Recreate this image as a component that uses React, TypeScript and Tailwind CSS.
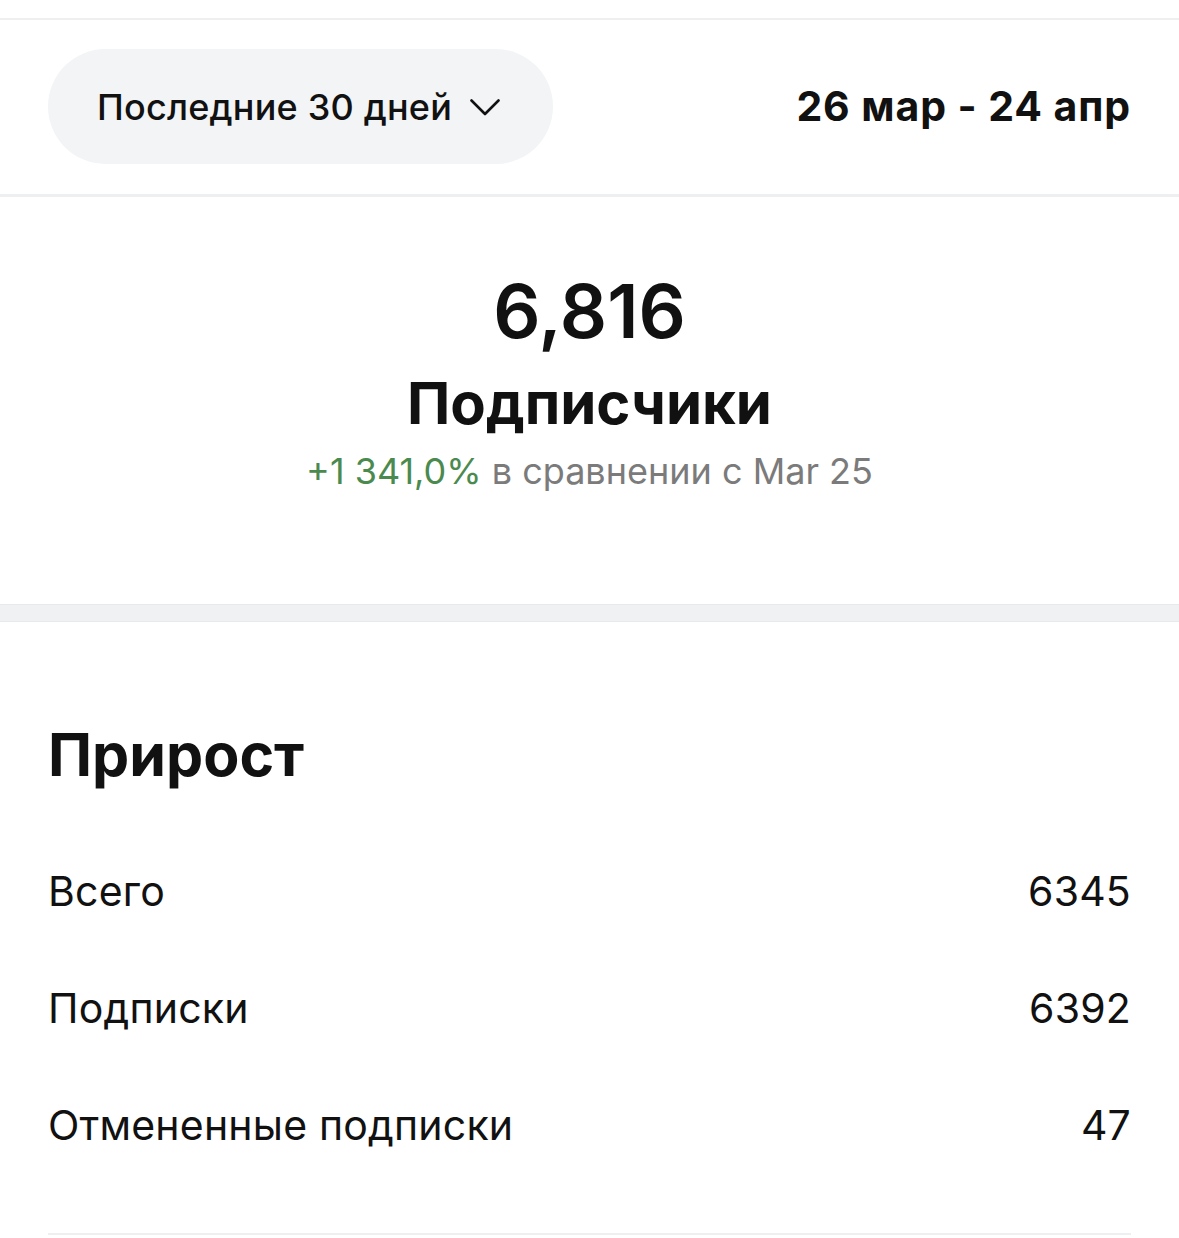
const rows = [
  { label: "Всего", value: "6345" },
  { label: "Подписки", value: "6392" },
  { label: "Отмененные подписки", value: "47" },
];

const App = () => {
  return (
    <div className="min-h-screen bg-white text-[#111111] font-['Inter','Noto_Sans',sans-serif]">
      {/* TOP BAR */}
      <div className="pt-[18px]">
        <div className="h-[2px] bg-[#eeeff1]" />
      </div>

      <div className="flex items-center justify-between px-[48px] pt-[29px] pb-[30px]">
        <button className="flex h-[115px] w-[505px] items-center gap-[18px] rounded-full bg-[#f2f4f5] pl-[49px] text-[36px] font-medium tracking-[0.2px]">
          Последние 30 дней
          <svg width="30" height="17" viewBox="0 0 30 17" fill="none" className="mt-[2px]">
            <polyline
              points="1.5,1.5 15,15 28.5,1.5"
              stroke="#111111"
              strokeWidth="2.6"
              strokeLinecap="round"
              strokeLinejoin="round"
            />
          </svg>
        </button>
        <div className="text-[41px] font-bold tracking-[0.9px]">26 мар - 24 апр</div>
      </div>

      <div className="h-[3px] bg-[#eeeff1]" />

      {/* TOTAL */}
      <div className="flex flex-col items-center pt-[64px] pb-[111px]">
        <div className="text-[74px] font-semibold leading-[100px]">6,816</div>
        <div className="mt-[7px] text-[58px] font-bold leading-[70px]">Подписчики</div>
        <div className="mt-[11px] text-[36px] leading-[44px] text-[#7b7b7b]">
          <span className="text-[#4b8a4f]">+1 341,0%</span> в сравнении с Mar 25
        </div>
      </div>

      <div className="h-[18px] border-y border-[#e8e9eb] bg-[#f0f1f3]" />

      {/* GROWTH */}
      <div className="px-[48px] pt-[98px]">
        <h2 className="text-[59px] font-bold leading-[70px]">Прирост</h2>
        <div className="mt-[42px] mb-[50px] flex flex-col">
          {rows.map((row) => (
            <div
              key={row.label}
              className="flex h-[117px] items-center justify-between text-[41px] leading-[48px] tracking-[0.2px]"
            >
              <span>{row.label}</span>
              <span>{row.value}</span>
            </div>
          ))}
        </div>
        <div className="h-[2px] bg-[#eeeff1]" />
      </div>
    </div>
  );
};

export default App;
